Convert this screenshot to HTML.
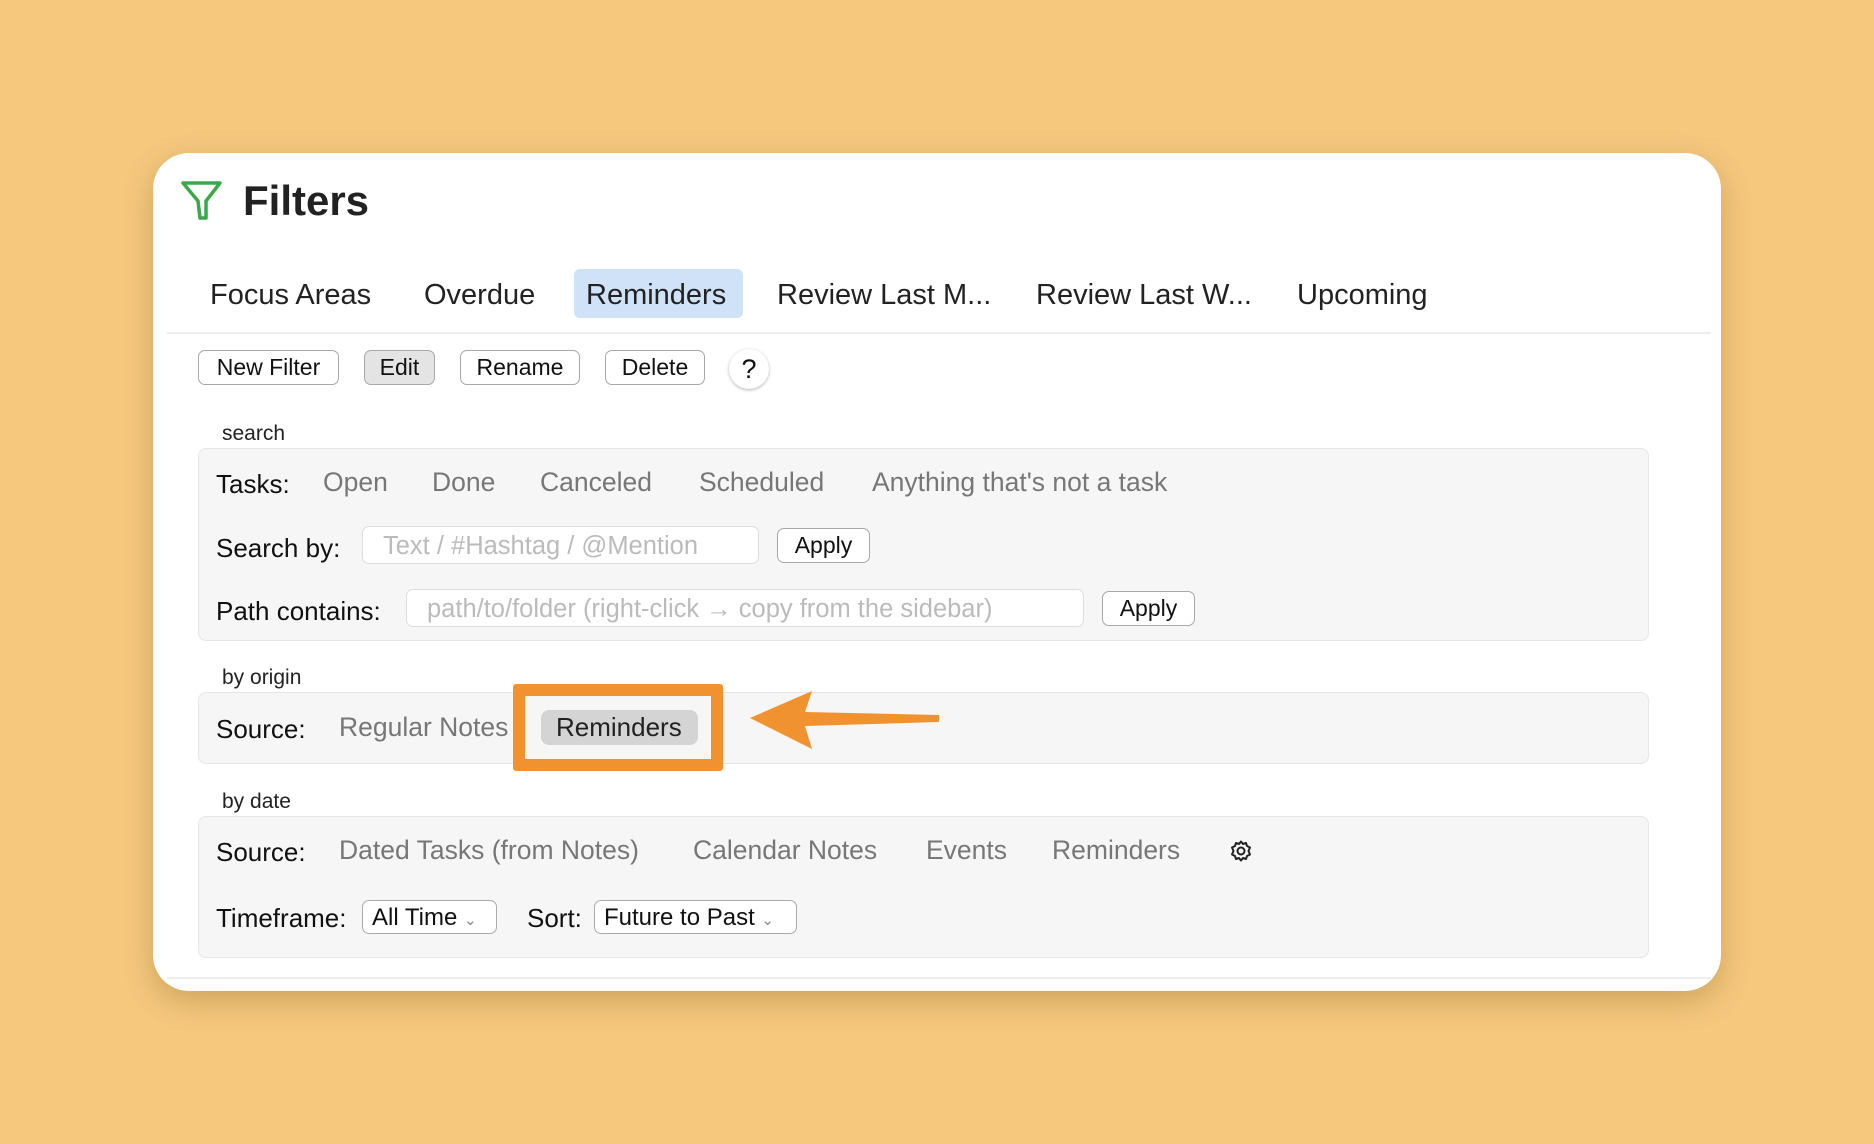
<!DOCTYPE html><html><head><style>
body{margin:0;width:1874px;height:1144px;background:#f5c87e;font-family:"Liberation Sans",sans-serif;position:relative;overflow:hidden}
.a{position:absolute;white-space:nowrap}
.card{position:absolute;left:153px;top:153px;width:1568px;height:838px;background:#fff;border-radius:36px;box-shadow:0 10px 30px rgba(120,80,20,.3)}
.tab{font-size:29px;color:#222;top:279px}
.btn{top:350px;height:33px;border:1.5px solid #a8a8a8;border-radius:7px;font-size:23px;line-height:33px;text-align:center;color:#111;background:#fff}
.lbl{font-size:21px;color:#222}
.box{left:198px;width:1449px;background:#f6f6f6;border:1px solid #e6e6e6;border-radius:8px}
.t{font-size:26px;color:#111}
.g{font-size:26.5px;color:#777}
.inp{height:38px;border:1px solid #ddd;border-radius:7px;background:#fff;font-size:25.5px;color:#bbb;line-height:38px;padding-left:20px;box-sizing:border-box}
.sel{height:34px;border:1.5px solid #aaa;border-radius:7px;background:#fff;font-size:24px;color:#111;line-height:33px;padding-left:9px;box-sizing:border-box}
</style></head><body>
<div class="card"></div>
<svg class="a" style="left:180px;top:180px" width="44" height="42" viewBox="0 0 44 42"><path d="M3 3 H40 L26 21 V38 L20 38 L18 21 Z" fill="none" stroke="#3ca84a" stroke-width="3.5" stroke-linejoin="round"/></svg>
<div class="a" style="left:243px;top:177px;font-size:42px;font-weight:bold;color:#222">Filters</div>
<div class="a" style="left:574px;top:269px;width:169px;height:49px;background:#cfe2f8;border-radius:6px"></div>
<div class="a tab" style="left:210px">Focus Areas</div>
<div class="a tab" style="left:424px">Overdue</div>
<div class="a tab" style="left:586px">Reminders</div>
<div class="a tab" style="left:777px">Review Last M...</div>
<div class="a tab" style="left:1036px">Review Last W...</div>
<div class="a tab" style="left:1297px">Upcoming</div>
<div class="a" style="left:167px;top:332px;width:1544px;height:2px;background:#eee"></div>
<div class="a btn" style="left:198px;width:139px">New Filter</div>
<div class="a btn" style="left:364px;width:69px;background:#e4e4e4">Edit</div>
<div class="a btn" style="left:460px;width:118px">Rename</div>
<div class="a btn" style="left:605px;width:98px">Delete</div>
<div class="a" style="left:729px;top:349px;width:40px;height:40px;border-radius:50%;background:#fff;box-shadow:0 1px 3px rgba(0,0,0,.3);font-size:27px;text-align:center;line-height:40px;color:#111">?</div>
<div class="a lbl" style="left:222px;top:422px">search</div>
<div class="a box" style="top:448px;height:191px"></div>
<div class="a t" style="left:216px;top:469px">Tasks:</div>
<div class="a g" style="left:323px;top:467px">Open</div>
<div class="a g" style="left:432px;top:467px">Done</div>
<div class="a g" style="left:540px;top:467px">Canceled</div>
<div class="a g" style="left:699px;top:467px">Scheduled</div>
<div class="a g" style="left:872px;top:467px">Anything that's not a task</div>
<div class="a t" style="left:216px;top:533px">Search by:</div>
<div class="a inp" style="left:362px;top:526px;width:397px">Text / #Hashtag / @Mention</div>
<div class="a btn" style="left:777px;top:528px;width:91px">Apply</div>
<div class="a t" style="left:216px;top:596px">Path contains:</div>
<div class="a inp" style="left:406px;top:589px;width:678px">path/to/folder (right-click → copy from the sidebar)</div>
<div class="a btn" style="left:1102px;top:591px;width:91px">Apply</div>
<div class="a lbl" style="left:222px;top:666px">by origin</div>
<div class="a box" style="top:692px;height:70px"></div>
<div class="a t" style="left:216px;top:714px">Source:</div>
<div class="a g" style="left:339px;top:712px">Regular Notes</div>
<div class="a" style="left:541px;top:710px;width:157px;height:35px;background:#d4d4d4;border-radius:8px"></div>
<div class="a t" style="left:556px;top:712px;color:#222">Reminders</div>
<div class="a" style="left:513px;top:684px;width:210px;height:87px;border:12px solid #f0922f;box-sizing:border-box;border-radius:3px"></div>
<svg class="a" style="left:745px;top:685px" width="200" height="70"><path d="M5 33 L67 6 L60 27 L194 30 L194 37 L60 41 L67 64 Z" fill="#f0922f"/></svg>
<div class="a lbl" style="left:222px;top:790px">by date</div>
<div class="a box" style="top:816px;height:140px"></div>
<div class="a t" style="left:216px;top:837px">Source:</div>
<div class="a g" style="left:339px;top:835px">Dated Tasks (from Notes)</div>
<div class="a g" style="left:693px;top:835px">Calendar Notes</div>
<div class="a g" style="left:926px;top:835px">Events</div>
<div class="a g" style="left:1052px;top:835px">Reminders</div>
<svg class="a" style="left:1229px;top:839px" width="24" height="24" viewBox="0 0 24 24"><circle cx="12" cy="12" r="3.5" fill="none" stroke="#222" stroke-width="2"/><path d="M12 2.5 L14 5 L17 4 L18 7 L21 8.5 L19.5 12 L21 15.5 L18 17 L17 20 L14 19 L12 21.5 L10 19 L7 20 L6 17 L3 15.5 L4.5 12 L3 8.5 L6 7 L7 4 L10 5 Z" fill="none" stroke="#222" stroke-width="2" stroke-linejoin="round"/></svg>
<div class="a t" style="left:216px;top:903px">Timeframe:</div>
<div class="a sel" style="left:362px;top:900px;width:135px">All Time <span style="font-size:15px;color:#888">&#8964;</span></div>
<div class="a t" style="left:527px;top:903px">Sort:</div>
<div class="a sel" style="left:594px;top:900px;width:203px">Future to Past <span style="font-size:15px;color:#888">&#8964;</span></div>
<div class="a" style="left:167px;top:977px;width:1544px;height:2px;background:#eee"></div>
</body></html>
